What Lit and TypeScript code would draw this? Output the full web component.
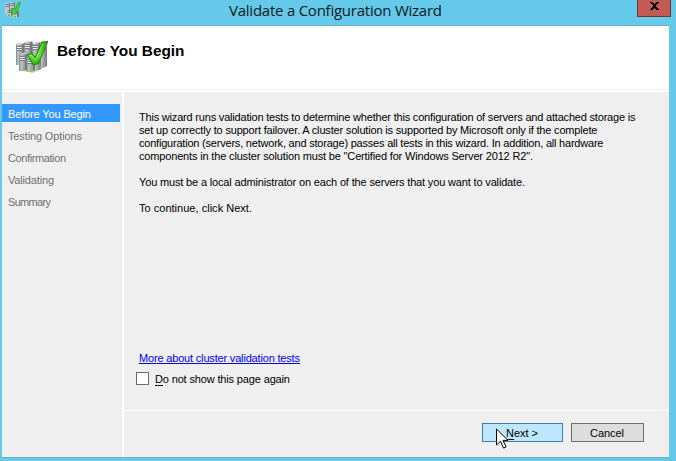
import { LitElement, html, css, svg } from "lit";
import { customElement, property } from "lit/decorators.js";

/** One line of text, spaced (or stretched) so that it takes a given width. */
@customElement("fit-text")
class FitText extends LitElement {
  @property({ type: Number }) width = 0;
  @property({ type: Boolean }) stretch = false;
  static styles = css`
    :host { display: inline-block; white-space: pre; }
    span { display: inline-block; transform-origin: 0 50%; }
  `;
  firstUpdated() {
    const s = this.shadowRoot!.querySelector("span") as HTMLElement;
    const n = (this.textContent || "").length;
    const natural = s.getBoundingClientRect().width;
    if (n < 2 || !this.width) return;
    if (this.stretch) s.style.transform = `scaleX(${this.width / natural})`;
    else s.style.letterSpacing = `${(this.width - natural) / (n - 1)}px`;
  }
  render() {
    return html`<span><slot></slot></span>`;
  }
}

const tower = (x: number, y: number, h: number) => svg`
  <path d="M${x} ${y + 1.5}l3-1.5h5.5l-2 1.5z" fill="#d0d2d6"/>
  <path d="M${x + 6} ${y + 1.5}l2.5-1.5v${h - 2}l-2.5 2z" fill="#74787e"/>
  <rect x=${x} y=${y + 1.5} width="6.2" height=${h - 1.5} fill="url(#face)"/>
  <path d="M${x + 1} ${y + 3.5}h4.4M${x + 1} ${y + 5.5}h4.4M${x + 1} ${y + 7.5}h4.4" stroke="#666b73" stroke-width=".9"/>
  <path d="M${x + 1} ${y + 4.5}h4.4M${x + 1} ${y + 6.5}h4.4" stroke="#fff" stroke-width=".9"/>`;

const servers = () => html`<svg width="33" height="33" viewBox="0 0 33 33">
  <defs>
    <linearGradient id="face"><stop stop-color="#7f838a"/><stop offset=".35" stop-color="#c3c6ca"/><stop offset="1" stop-color="#8d9198"/></linearGradient>
    <linearGradient id="side"><stop stop-color="#dcdde0"/><stop offset="1" stop-color="#73777e"/></linearGradient>
    <linearGradient id="tick" x2="0" y2="1"><stop stop-color="#35a81a"/><stop offset=".6" stop-color="#66e035"/><stop offset="1" stop-color="#2fae12"/></linearGradient>
  </defs>
  ${tower(1, 2, 22)}${tower(9, 0, 22)}${tower(17, 1, 22)}
  <path d="M24 8l8-3v20l-8 4z" fill="url(#side)"/>
  ${tower(4, 12, 18)}
  <path d="M18 16l8 3v9l-8 4z" fill="url(#side)"/>
  ${tower(11.5, 15, 16)}
  <path d="M7.5 27.5h2.4v2.4h-2.4zM15.5 29h2.4v2.4h-2.4zM25 25h1.5v2h-1.5z" fill="#62e010"/>
  <path d="M12.6 14l4.2-1.6 3.4 4.2L27 1l5.8-.4-9.4 21.6-5 1.8z" fill="url(#tick)" stroke="#1f8d10" stroke-width="1.1"/>
  <path d="M14.2 14.8l2.1-.8 3.8 5.1L28 2.4" fill="none" stroke="#93ee68" stroke-width=".9"/>
</svg>`;

const smallServers = () => html`<svg width="16" height="16" viewBox="0 0 16 16">
  <path d="M0 1h4v11H0zM5 0h4v11H5zM2 6h4v8H2zM8 8h4v8H8z" fill="#c5cacf"/>
  <path d="M4 1h1v10H4zM9 0h1v7H9zM6 6h1.5v8H6zM12 9h2v6h-2z" fill="#777c82"/>
  <path d="M.5 2.5H4M.5 4.5H4M5.5 1.5H9M5.5 3.5H9M2.5 8.5H6M2.5 10.5H6M8.5 11.5H12" stroke="#73787f"/>
  <path d="M3 12.5h2v1.5H3zM9 14h2v1.5H9z" fill="#55cf16"/>
  <path d="M6 7l2-1 2 2.5L13 1l2.8-.7L11 12l-2 .5z" fill="#4ed52a" stroke="#269c17" stroke-width=".7"/>
</svg>`;

const steps: [string, number][] = [
  ["Before You Begin", 83],
  ["Testing Options", 74],
  ["Confirmation", 58],
  ["Validating", 46],
  ["Summary", 43],
];

const lines: [string, number][] = [
  ["This wizard runs validation tests to determine whether this configuration of servers and attached storage is", 496.5],
  ["set up correctly to support failover. A cluster solution is supported by Microsoft only if the complete", 458.5],
  ["configuration (servers, network, and storage) passes all tests in this wizard. In addition, all hardware", 464.5],
  ["components in the cluster solution must be \"Certified for Windows Server 2012 R2\".", 394],
  ["", 0],
  ["You must be a local administrator on each of the servers that you want to validate.", 386],
  ["", 0],
  ["To continue, click Next.", 113],
];

@customElement("app-root")
class AppRoot extends LitElement {
  static styles = css`
    :host {
      display: block; width: 676px; height: 461px; overflow: hidden;
      background: #65c9e9; color: #000;
      font: 11px/13px "Liberation Sans", Arial, sans-serif;
    }
    * { box-sizing: border-box; }
    svg { display: block; }
    .frame { position: relative; display: flex; flex-direction: column; height: 461px; padding: 0 7px 3px 2px; }
    .titlebar { display: flex; height: 26px; flex: none; border-bottom: 1px solid #68b0c9; }
    .titlebar svg { flex: none; }
    .titlebar > svg { margin: 2px 0 0 3px; }
    .title { margin-left: 208px; font: 15px/20px "Open Sans", "Noto Sans", sans-serif; color: #0b1a20; }
    .close { margin-left: auto; margin-right: -2px; width: 34px; height: 17px; background: #c35b52; border: 1px solid #6c3536; border-top: 0; display: flex; justify-content: center; padding-top: 2px; }
    .header { display: flex; height: 66px; flex: none; background: #fff; border-bottom: 2px solid #fff; box-shadow: inset 0 -1px #efefef; padding: 15px 0 0 13px; }
    .header h1 { margin: 2px 0 0 9px; font: bold 14px/16px "Liberation Sans", Arial, sans-serif; }
    .body { display: flex; flex: 1; background: #efefef; border-bottom: 1px solid #69aeca; }
    .steps { width: 122px; flex: none; border-right: 2px solid #fff; padding: 12px 2px 0 0; display: flex; flex-direction: column; gap: 4px; color: #707070; }
    .step { height: 18px; padding: 4px 0 0 6px; }
    .step.on { background: #3399ff; color: #fff; }
    .main { flex: 1; display: flex; flex-direction: column; }
    .page { height: 318px; padding: 19px 0 0 15px; display: flex; flex-direction: column; }
    .line { height: 13px; }
    .link { margin-top: 137px; height: 12px; color: #0000f0; text-decoration: none; width: 161px; border-bottom: 1px solid #0000f0; }
    .check { display: flex; margin: 8px 0 0 -3px; height: 13px; }
    .check fit-text { margin-top: 1px; }
    .box { width: 13px; height: 13px; background: #fff; border: 1px solid #6a6a6a; margin-right: 6px; }
    u { text-decoration: none; box-shadow: 0 1px #000; }
    .check u { box-shadow: none; border-bottom: 1px solid #000; }
    .buttons { flex: 1; border-top: 1px solid #fff; display: flex; justify-content: flex-end; gap: 8px; padding: 12px 25px 0 0; }
    .btn { height: 19px; width: 73px; border: 1px solid #707070; background: #dddddd; padding: 3px 0 0 18px; }
    .btn.hot { width: 81px; border-color: #3c7fb1; background: #bee6fd; padding-left: 23px; }
    .cursor { position: absolute; left: 496px; top: 428px; }
  `;

  render() {
    return html`<div class="frame">
      <div class="titlebar">
        ${smallServers()}
        <div class="title"><fit-text width="213">Validate a Configuration Wizard</fit-text></div>
        <div class="close"><svg width="9" height="8" viewBox="0 0 9 8" shape-rendering="crispEdges"><path d="M0 0h3v1h1v1h1V1h1V0h3v1H8v1H7v1H6v2h1v1h1v1h1v1H6V7H5V6H4v1H3v1H0V7h1V6h1V5h1V3H2V2H1V1H0z" /></svg></div>
      </div>
      <div class="header">${servers()}<h1><fit-text stretch width="127.5">Before You Begin</fit-text></h1></div>
      <div class="body">
        <div class="steps">
          ${steps.map(([t, w], i) => html`<div class="step ${i ? "" : "on"}"><fit-text width=${w}>${t}</fit-text></div>`)}
        </div>
        <div class="main">
          <div class="page">
            ${lines.map(([t, w]) => html`<div class="line">${t ? html`<fit-text width=${w}>${t}</fit-text>` : ""}</div>`)}
            <a class="link"><fit-text width="161">More about cluster validation tests</fit-text></a>
            <label class="check"><span class="box"></span><fit-text width="135"><u>D</u>o not show this page again</fit-text></label>
          </div>
          <div class="buttons">
            <div class="btn hot"><fit-text width="32"><u>N</u>ext &gt;</fit-text></div>
            <div class="btn"><fit-text width="34">Cancel</fit-text></div>
          </div>
        </div>
      </div>
      <svg class="cursor" width="13" height="22" viewBox="0 0 13 22"><path d="M.5 1v16l4-3.7 3 6.8 2.6-1.1-3-6.6h5z" fill="#fff" stroke="#000"/></svg>
    </div>`;
  }
}
